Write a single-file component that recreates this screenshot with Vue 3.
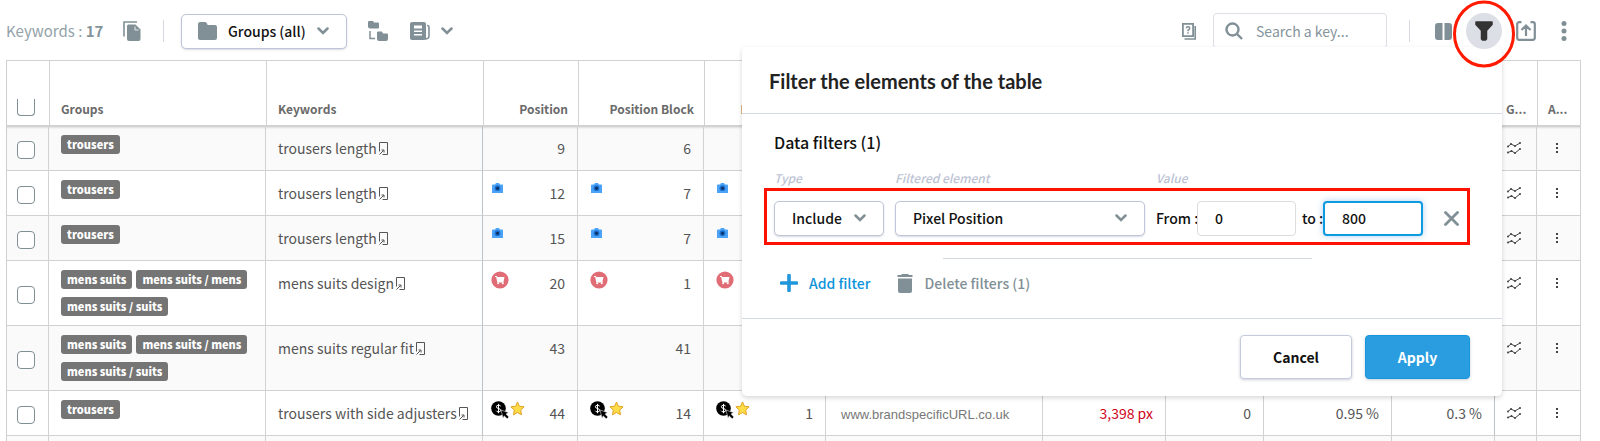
<script setup>
import { ref } from 'vue'

const rows = [
  { tags: ['trousers'], keyword: 'trousers length', icons: [], position: 9, block: 6 },
  { tags: ['trousers'], keyword: 'trousers length', icons: ['camera'], position: 12, block: 7 },
  { tags: ['trousers'], keyword: 'trousers length', icons: ['camera'], position: 15, block: 7 },
  { tags: ['mens suits', 'mens suits / mens', 'mens suits / suits'], keyword: 'mens suits design', icons: ['cart'], position: 20, block: 1 },
  { tags: ['mens suits', 'mens suits / mens', 'mens suits / suits'], keyword: 'mens suits regular fit', icons: [], position: 43, block: 41 },
  {
    tags: ['trousers'], keyword: 'trousers with side adjusters', icons: ['paid', 'star'], position: 44, block: 14,
    page: '1', url: 'www.brandspecificURL.co.uk', pixel: '3,398 px', volume: '0', share: '0.95 %', rate: '0.3 %'
  }
]

const from = ref('0')
const to = ref('800')
</script>

<template>
  <div class="page">
    <header class="toolbar">
      <p class="count">Keywords : <b>17</b></p>
      <button class="tool copy" aria-label="Copy">
        <svg width="18" height="20" viewBox="0 0 18 20">
          <path d="M1 15.500V1h13" fill="none" stroke="#819096" stroke-width="1.600" />
          <path d="M5 3.500h7.500l5 5V18a2 2 0 0 1-2 2H6a2 2 0 0 1-2-2V4.500z" fill="#819096" />
          <path d="M12 5.500V9H15.500" fill="none" stroke="#fff" stroke-width=".8" />
        </svg>
      </button>
      <span class="divider"></span>
      <div class="pick groups">
        <svg class="lead" width="19" height="18" viewBox="0 0 19 18">
          <path d="M2 0h5q1.500 0 2 1.500l.6 1.500H17a2 2 0 0 1 2 2v11a2 2 0 0 1-2 2H2a2 2 0 0 1-2-2V2a2 2 0 0 1 2-2z" fill="#819096" />
        </svg>
        <select aria-label="Groups"><option>Groups (all)</option></select>
        <svg class="chev" width="12" height="8" viewBox="0 0 12 8"><path d="M1.500 1.500 6 6l4.500-4.500" /></svg>
      </div>
      <button class="tool tree" aria-label="Group tree">
        <svg width="20" height="20" viewBox="0 0 20 20" fill="#819096">
          <path d="M1 0h4l1 1.500h4q1 0 1 1v4q0 1-1 1H2Q0 7.500 0 5.500V1q0-1 1-1z" />
          <path d="M10 10.500h4l1 2h4q1 0 1 1v4.500q0 2-2 2h-7q-2 0-2-2v-6.500q0-1 1-1z" />
          <path d="M2 10v7.500h5" fill="none" stroke="#819096" stroke-width="1.500" />
        </svg>
      </button>
      <button class="tool news" aria-label="Reports">
        <svg width="20" height="18" viewBox="0 0 20 18">
          <rect width="16" height="18" rx="2" fill="#819096" />
          <path d="M17 3.500q2 0 2 2V14q0 3-4 3" fill="none" stroke="#819096" stroke-width="1.600" />
          <path d="M4 3.500h8v3H4zM4 8.500h8V10H4zM4 12h8v1.500H4z" fill="#fff" />
        </svg>
        <svg class="chevron" width="12" height="8" viewBox="0 0 12 8"><path d="M1.500 1.500 6 6l4.500-4.500" /></svg>
      </button>

      <button class="tool help" aria-label="Help">
        <svg width="14" height="17" viewBox="0 0 14 17" fill="none" stroke="#819096">
          <path d="M.9.900h10.200v12.200H.9z" stroke-width="1.800" />
          <path d="M2.500 16h10.700V3" stroke-width="1.600" />
          <path d="M4.300 5.200Q4.300 3.800 6 3.800T7.700 5.200Q7.700 6.300 6 7.200v1M6 9.300v1.500" stroke-width="1.500" />
        </svg>
      </button>
      <div class="search">
        <svg width="18" height="18" viewBox="0 0 18 18" fill="none" stroke="#819096" stroke-width="2.400">
          <circle cx="7.500" cy="7.500" r="6" /><path d="m12 12 5 5" />
        </svg>
        <input type="text" placeholder="Search a key..." aria-label="Search a keyword">
      </div>
      <span class="divider right"></span>
      <button class="tool columns" aria-label="Columns">
        <svg width="17" height="17" viewBox="0 0 17 17" fill="#819096">
          <path d="M7.500 0v17H3a3 3 0 0 1-3-3V3a3 3 0 0 1 3-3zM9.500 0v17H14a3 3 0 0 0 3-3V3a3 3 0 0 0-3-3z" />
        </svg>
      </button>
      <div class="funnel">
        <button class="tool round" aria-label="Filter">
          <svg width="18" height="20" viewBox="0 0 18 20">
            <path d="M1 1h16v2.500l-5.500 6V18l-1 1h-3l-1-1V9.500L1 3.500z" fill="#333" stroke="#333" stroke-width="1.500" stroke-linejoin="round" />
          </svg>
        </button>
        <svg class="ring" width="62" height="68" viewBox="0 0 62 68">
          <ellipse cx="31" cy="34" rx="29.500" ry="32" fill="none" stroke="#ff1a00" stroke-width="3" />
        </svg>
      </div>
      <button class="tool export" aria-label="Export">
        <svg width="20" height="20" viewBox="0 0 20 20" fill="none" stroke="#819096" stroke-width="2.200">
          <path d="M5.500 1.200H3.200a2 2 0 0 0-2 2v13.600a2 2 0 0 0 2 2h13.600a2 2 0 0 0 2-2V3.200a2 2 0 0 0-2-2h-2.300M10 15V4.500M5.500 9 10 4.500 14.500 9" />
        </svg>
      </button>
      <button class="tool" aria-label="More">
        <svg width="6" height="20" viewBox="0 0 6 20" fill="#819096"><circle cx="3" cy="2.500" r="2.500" /><circle cx="3" cy="10" r="2.500" /><circle cx="3" cy="17.500" r="2.500" /></svg>
      </button>
    </header>

    <table>
      <colgroup>
        <col class="w-check"><col class="w-text"><col class="w-text"><col class="w-pos"><col class="w-block"><col class="w-page">
        <col><col class="w-pixel"><col class="w-volume"><col class="w-share"><col class="w-rate"><col class="w-graph"><col class="w-action">
      </colgroup>
      <thead>
        <tr>
          <th class="check"><input type="checkbox" class="cut" aria-label="Select all"></th>
          <th>Groups</th>
          <th>Keywords</th>
          <th class="num">Position</th>
          <th class="num">Position Block</th>
          <th class="num">Position URL</th>
          <th></th><th></th><th></th><th></th><th></th>
          <th class="tight">G...</th>
          <th class="tight">A...</th>
        </tr>
      </thead>
      <tbody>
        <tr v-for="(r, i) in rows" :key="i">
          <td class="check"><input type="checkbox" :aria-label="'Select ' + r.keyword"></td>
          <td><div class="tags"><span v-for="t in r.tags" :key="t" class="tag">{{ t }}</span></div></td>
          <td class="strong">
            <span class="line">{{ r.keyword }}
              <svg class="doc" width="9" height="13" viewBox="0 0 9 13" fill="none" stroke="#555">
                <path d="M.5 9.500V.5h8v12h-5" /><path d="m.5 12.500 4-4M2.500 8H5v2.500" />
              </svg>
            </span>
          </td>
          <td v-for="(v, c) in [r.position, r.block, r.page]" :key="c" class="num" :class="{ first: c === 0 }">
            <div class="cell">
              <span class="icons">
                <template v-for="k in r.icons" :key="k">
                  <svg v-if="k === 'camera'" class="camera" width="11" height="10" viewBox="0 0 11 10">
                    <path d="M1 1.500h2L4 0h3l1 1.500h2q1 0 1 1V10H0V2.500q0-1 1-1z" fill="#4ba3f8" />
                    <circle cx="5.500" cy="5.200" r="2.900" fill="#1b6fd0" /><circle cx="5.500" cy="5.200" r="1.500" fill="#0c2f5c" />
                  </svg>
                  <svg v-else-if="k === 'cart'" width="18" height="18" viewBox="0 0 18 18">
                    <circle cx="9" cy="9" r="8.600" fill="#e06c75" />
                    <path d="M4 5h1.800l.5 1h7.200l-1 4.500.3 1H6.300L5.200 6H4z" fill="#fff" />
                    <circle cx="7.200" cy="12.300" r="1" fill="#fff" /><circle cx="11.800" cy="12.300" r="1" fill="#fff" />
                  </svg>
                  <svg v-else-if="k === 'paid'" width="18" height="18" viewBox="0 0 18 18">
                    <circle cx="7.500" cy="7.500" r="7.300" fill="#000" />
                    <path d="M9.700 5.200Q9.200 4.200 7.500 4.200 5.400 4.200 5.400 5.800q0 1.300 2.100 1.700t2.200 1.800q0 1.600-2.200 1.600-1.800 0-2.300-1.200M7.500 2.900v9.300" fill="none" stroke="#fff" />
                    <path d="m10 9 7.500 2.600-2.400 1.500 2.800 3-1.700 1.700-3-2.900-1.200 2.300z" fill="#000" stroke="#fff" stroke-width=".5" />
                  </svg>
                  <svg v-else width="15" height="15" viewBox="0 0 15 15">
                    <path d="m7.500 1 1.900 4.200 4.700.6-3.400 3.300.8 4.700-4-2.300-4 2.300.8-4.700L.9 5.800l4.700-.6z" fill="#fddc47" stroke="#e3a224" stroke-linejoin="round" />
                  </svg>
                </template>
              </span>
              <span>{{ v }}</span>
            </div>
          </td>
          <td class="url"><span class="line">{{ r.url }}</span></td>
          <td class="num alert"><span class="line">{{ r.pixel }}</span></td>
          <td class="num"><span class="line">{{ r.volume }}</span></td>
          <td class="num"><span class="line">{{ r.share }}</span></td>
          <td class="num last"><span class="line">{{ r.rate }}</span></td>
          <td class="act">
            <svg width="14" height="12" viewBox="0 0 14 12" fill="none" stroke="#444">
              <path d="m1 4.500 3-2.500 4 2 5-3M1 10.500 4.500 9 8 11l5-4" />
              <path d="M1 4.500h.01M4 2h.01M8 4h.01M13 1h.01M1 10.500h.01M4.500 9h.01M8 11h.01M13 7h.01" stroke-width="2" stroke-linecap="round" />
            </svg>
          </td>
          <td class="act">
            <svg width="4" height="12" viewBox="0 0 4 12" fill="#444"><path d="M1 1h2v2H1zM1 5h2v2H1zM1 9h2v2H1z" /></svg>
          </td>
        </tr>
        <tr><td v-for="n in 13" :key="n"></td></tr>
      </tbody>
    </table>

    <section class="panel">
      <h2>Filter the elements of the table</h2>
      <div class="body">
        <h3>Data filters (1)</h3>
        <div class="labels">
          <label for="type" class="c-type">Type</label>
          <label for="element" class="c-element">Filtered element</label>
          <span>Value</span>
        </div>
        <div class="filter">
          <div class="pick c-type">
            <select id="type"><option>Include</option></select>
            <svg class="chev" width="12" height="8" viewBox="0 0 12 8"><path d="M1.500 1.500 6 6l4.500-4.500" /></svg>
          </div>
          <div class="pick c-element">
            <select id="element"><option>Pixel Position</option></select>
            <svg class="chev" width="12" height="8" viewBox="0 0 12 8"><path d="M1.500 1.500 6 6l4.500-4.500" /></svg>
          </div>
          <label for="from" class="from">From :</label>
          <input id="from" v-model="from" type="text">
          <label for="to" class="to">to :</label>
          <input id="to" v-model="to" type="text" class="active">
          <button class="tool remove" aria-label="Remove filter">
            <svg width="15" height="15" viewBox="0 0 15 15"><path d="m1.500 1.500 12 12m0-12-12 12" stroke="#819096" stroke-width="2.800" stroke-linecap="round" /></svg>
          </button>
        </div>
        <hr>
        <div class="actions">
          <button class="tool add">
            <svg width="18" height="18" viewBox="0 0 18 18"><path d="M9 1.500v15M1.500 9h15" stroke="#2196db" stroke-width="3.600" stroke-linecap="round" /></svg>
            Add filter
          </button>
          <button class="tool delete">
            <svg width="16" height="19" viewBox="0 0 16 19" fill="#819096"><path d="M5 0h6l1 1h3.500v2H.5V1H4zM1 4.500h14V17q0 2-2 2H3q-2 0-2-2z" /></svg>
            Delete filters (1)
          </button>
        </div>
      </div>
      <footer>
        <button class="btn cancel">Cancel</button>
        <button class="btn apply">Apply</button>
      </footer>
    </section>
  </div>
</template>

<style>
body { margin: 0; background: #fff; }
</style>

<style scoped>
* { box-sizing: border-box; }
.page {
  position: relative;
  height: 100vh;
  overflow: hidden;
  font-family: "Noto Sans CJK SC", "Noto Sans", sans-serif;
  font-size: 14px;
  line-height: 20px;
  color: #555;
}
button, input, select { font: inherit; color: inherit; }
p, h2, h3 { margin: 0; }
svg { display: block; flex: none; }
.tool { display: flex; align-items: center; padding: 0; border: 0; background: none; }

.toolbar { display: flex; align-items: center; height: 60px; padding: 2px 33px 0 6px; }
.count { width: 117px; font-size: 15px; color: #93a2a9; white-space: nowrap; }
.count b { color: #84949b; }
.divider { width: 1px; height: 22px; margin: 0 17px 0 22px; background: #d5d8e0; }
.pick { position: relative; height: 35px; }
.pick select {
  width: 100%; height: 100%; padding: 0 0 0 17px; appearance: none;
  border: 1px solid #bfc5d8; border-radius: 5px; background: #fff;
  font-weight: 500; color: #111; box-shadow: 0 1px 2px rgba(100, 110, 140, .25);
}
.groups { width: 166px; }
.groups select { padding-left: 46px; }
.lead { position: absolute; left: 17px; top: 8px; }
.chev { position: absolute; right: 18px; top: 13px; }
.chev path, .chevron path { fill: none; stroke: #819096; stroke-width: 2.5; stroke-linecap: round; }
.tree { margin-left: 21px; }
.news { margin-left: 22px; gap: 11px; }
.help { margin-left: auto; }
.search {
  display: flex; align-items: center; gap: 13px; width: 174px; height: 36px; margin-left: 17px; padding-left: 11px;
  border: 1px solid #dcdfe8; border-radius: 4px;
}
.search input { width: 110px; padding: 0; border: 0; outline: 0; background: none; }
.search input::placeholder { color: #84949b; opacity: 1; }
.divider.right { margin: 0 25px 0 22px; }
.columns { margin-right: 14px; }
.funnel { position: relative; z-index: 3; margin-right: 14px; }
.round { justify-content: center; width: 36px; height: 36px; border-radius: 50%; background: #dcdfe5; }
.ring { position: absolute; left: -13px; top: -13px; }
.export { margin-right: 25px; }

table { width: calc(100% - 25px); margin-left: 6px; table-layout: fixed; border-collapse: separate; border-spacing: 0; border-left: 1px solid #cfcfcf; }
.w-check { width: 42px; }
.w-text { width: 217px; }
.w-pos { width: 95px; }
.w-block { width: 126px; }
.w-page { width: 122px; }
.w-pixel { width: 123px; }
.w-volume { width: 98px; }
.w-share { width: 128px; }
.w-rate { width: 103px; }
.w-graph { width: 42px; }
.w-action { width: 44px; }
th {
  height: 66px; padding: 0 11px 6px; vertical-align: bottom; text-align: left; white-space: nowrap;
  font-size: 12px; font-weight: 700; color: #6a6a6a;
  border: solid #d2d2d2; border-width: 1px 0 1px 1px;
}
th:first-child { border-left: 0; }
th:last-child { border-right: 1px solid #d2d2d2; }
td { height: 45px; padding: 0 12px; vertical-align: top; border: solid #d2d2d2; border-width: 0 1px 1px 0; }
tbody tr:nth-child(odd) td { background: #fafafa; }
tbody tr:first-child td { box-shadow: inset 0 1px 0 #d2d2d2, inset 0 3px 2px -1px #ddd; }
.num { text-align: right; }
th.num { padding-right: 10px; }
th.tight { padding-left: 10px; padding-right: 0; }
.check { padding: 4px 0 0 10px; vertical-align: middle; }
th.check { padding: 0 0 9px 10px; vertical-align: bottom; }
input[type="checkbox"] {
  display: block; width: 18px; height: 18px; margin: 0; appearance: none;
  border: 1px solid #7f8f93; border-radius: 4px; background: #fff;
}
input.cut { height: 17px; border-top: 0; border-radius: 0 0 4px 4px; }
.tags { display: flex; flex-wrap: wrap; gap: 8px 4px; padding: 9px 0; }
.tag { height: 19px; padding: 0 6px; border-radius: 3px; background: #757575; color: #fff; font-size: 11px; line-height: 18px; font-weight: 900; white-space: nowrap; }
.line { display: flex; align-items: center; gap: 2px; height: 20px; margin-top: 12px; white-space: nowrap; }
.num .line { justify-content: flex-end; }
.cell { display: flex; justify-content: space-between; margin-top: 12px; height: 20px; }
.icons { display: flex; gap: 1px; margin-top: -2px; height: 18px; }
.first { padding-left: 8px; }
.strong, .last { border-right-color: #bcc4c9; }
.camera { margin: 2px 0 0 1px; }
.url { padding-left: 15px; font-family: "Liberation Sans", sans-serif; font-size: 13px; color: #777; }
.url .line { margin-top: 14px; }
.alert { color: #d0021b; }
.act { padding: 16px 14px 0 10px; }
.act svg { margin: 0 auto; }

.panel {
  position: absolute; z-index: 2; top: 47px; right: 98px; width: 760px;
  border-radius: 5px; background: #fff; box-shadow: 0 2px 5px rgba(0, 0, 0, .16); color: #111;
}
h2 { height: 67px; padding: 23px 27px 0; border-bottom: 1px solid #d5d9e2; font: 700 20px/22px Lato, sans-serif; color: #222; }
.body { padding: 16px 32px 23px 22px; border-bottom: 1px solid #d5d9e2; }
h3 { padding-left: 10px; font-size: 16px; line-height: 24px; font-weight: 500; }
.labels { display: flex; gap: 11px; margin: 15px 0 1px; padding-left: 10px; font-size: 12px; line-height: 18px; font-style: italic; font-weight: 500; color: #bcc3d3; }
.c-type { width: 110px; }
.c-element { width: 250px; }
.filter { display: flex; align-items: center; height: 57px; padding: 3px 7px 0; border: 3px solid #ff1100; font-weight: 500; }
.filter .c-element { margin: 0 11px; }
.filter input { width: 99px; height: 35px; padding: 0 0 0 17px; border: 1px solid #dcdcdf; border-radius: 4px; outline: 0; }
.filter input.active { width: 100px; border: 2px solid #0d9ade; box-shadow: 0 0 6px rgba(30, 120, 220, .35); }
.from { width: 41px; white-space: nowrap; }
.to { margin-left: 6px; width: 21px; white-space: nowrap; }
.remove { margin-left: 21px; }
hr { width: 369px; margin: 13px 0 0 179px; border: 0; border-top: 1px solid #d5d9e2; }
.actions { display: flex; margin-top: 12px; padding-left: 16px; gap: 26px; font-weight: 500; }
.actions .tool { height: 24px; gap: 11px; }
.actions .add { color: #0d94da; }
.actions .delete { gap: 12px; color: #819096; }
footer { display: flex; justify-content: flex-end; gap: 13px; padding: 16px 32px 17px; }
.btn { height: 44px; padding: 0; border-radius: 4px; font-weight: 700; box-shadow: 0 1px 3px rgba(80, 90, 120, .3); }
.cancel { width: 112px; border: 1px solid #c5cbdb; background: #fff; }
.apply { width: 105px; border: 1px solid #1497dd; background: #2a9de0; color: #fff; }
</style>
